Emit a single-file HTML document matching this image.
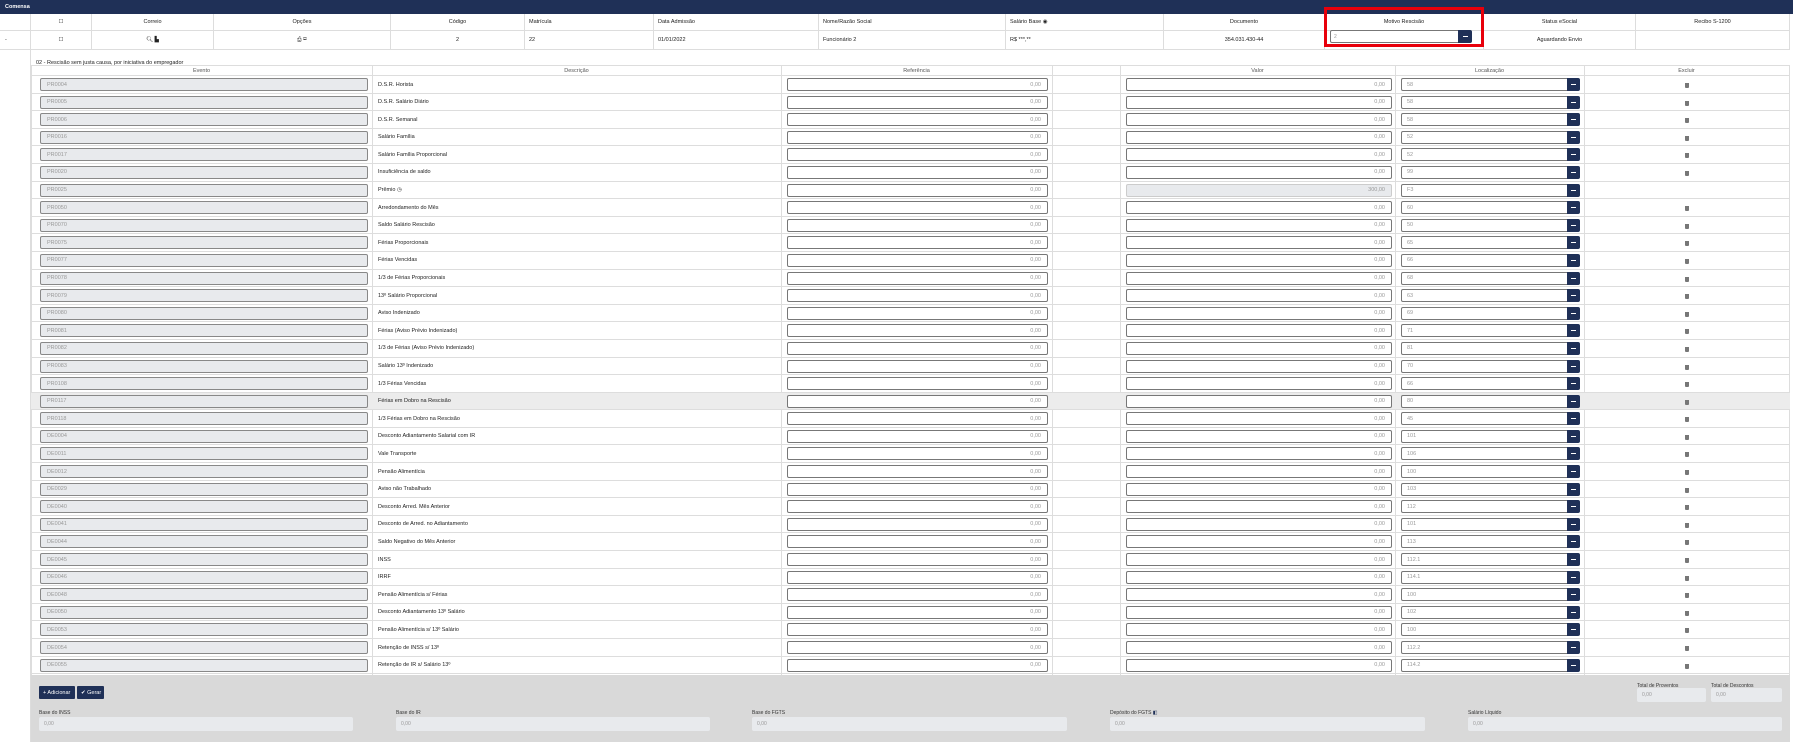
<!DOCTYPE html>
<html><head><meta charset="utf-8"><style>
*{box-sizing:border-box;margin:0;padding:0}
body{width:1793px;height:742px;background:#fff;font-family:"Liberation Sans",sans-serif;font-size:5.5px;color:#222;position:relative;overflow:hidden}
.bar{position:absolute;left:0;top:0;width:1793px;height:14px;background:#1f3057;color:#fff;font-weight:bold;padding:4px 5px;font-size:5.5px}
.th,.td{position:absolute;left:0;width:1790px;border-bottom:1px solid #ddd}
.th{top:14px;height:17px}.td{top:31px;height:19px}
.th span,.td span{position:absolute;top:0;height:100%;border-left:1px solid #ddd;display:flex;align-items:center;justify-content:center}
.gut{position:absolute;left:30px;top:50px;width:1px;height:692px;background:#ddd}
.sub{position:absolute;left:36px;top:60px;font-size:5.5px}
.tbl{position:absolute;left:31px;top:65px;width:1759px}
.hd,.r{position:relative;height:17.6px;border-bottom:1px solid #ddd}
.hd{height:11px}
.hd span{position:absolute;top:0;height:100%;display:flex;align-items:center;justify-content:center;color:#555}
.r>*{position:absolute;top:2px;height:13px;display:flex;align-items:center;font-style:normal;font-weight:normal;text-decoration:none}
.e{left:9px;width:328px;background:#e8eaed;border:1px solid #888;border-radius:2px;padding-left:6px;color:#999}
.d{left:347px;color:#222}
.f{left:756px;width:261px;background:#fff;border:1px solid #777;border-radius:2px;justify-content:flex-end;padding-right:6px;color:#999}
.v{left:1095px;width:266px;background:#fff;border:1px solid #777;border-radius:2px;justify-content:flex-end;padding-right:6px;color:#999}
.v.g{background:#e8eaed;border-color:#ccc}
.l{left:1370px;width:167px;background:#fff;border:1px solid #777;border-radius:2px 0 0 2px;padding-left:5px;color:#999}
.r u{left:1536px;width:13px;background:#1f3057;border-radius:0 2px 2px 0}
.r u:after{content:"";width:5px;height:1px;background:#fff;margin:auto}
.r s{left:1654px;top:7px;width:4px;height:5px;background:#777;border-radius:0 0 1px 1px}
.vl{position:absolute;top:0;width:1px;background:#ddd;height:100%}
.hl{background:#ececec}
.foot{position:absolute;left:31px;top:675px;width:1759px;height:67px;background:#d9d9d9}
.btn{position:absolute;top:11px;height:13px;background:#1f3057;color:#fff;display:flex;align-items:center;padding-left:4px;font-size:5.5px;border-radius:1px}
.lb{position:absolute;font-size:5px;color:#333}
.in{position:absolute;height:14px;background:#e8eaed;border-radius:2px;color:#999;padding:4px 5px;font-size:5px}
</style></head><body>
<div class="bar">Comensa</div>
<div class="th">
<span style="left:30px;width:61px">☐</span><span style="left:91px;width:122px">Correio</span><span style="left:213px;width:177px">Opções</span><span style="left:390px;width:134px">Código</span><span style="left:524px;width:129px;justify-content:flex-start;padding-left:4px">Matrícula</span><span style="left:653px;width:165px;justify-content:flex-start;padding-left:4px">Data Admissão</span><span style="left:818px;width:187px;justify-content:flex-start;padding-left:4px">Nome/Razão Social</span><span style="left:1005px;width:158px;justify-content:flex-start;padding-left:4px">Salário Base ◉</span><span style="left:1163px;width:161px">Documento</span><span style="left:1324px;width:159px">Motivo Rescisão</span><span style="left:1483px;width:152px">Status eSocial</span><span style="left:1635px;width:155px;border-right:1px solid #ddd">Recibo S-1200</span>
</div>
<div class="td">
<span style="left:0;width:30px;border:none;justify-content:flex-start;padding-left:5px">-</span><span style="left:30px;width:61px">☐</span><span style="left:91px;width:122px">🔍︎ ▙</span><span style="left:213px;width:177px">⎙ ✉</span><span style="left:390px;width:134px">2</span><span style="left:524px;width:129px;justify-content:flex-start;padding-left:4px">22</span><span style="left:653px;width:165px;justify-content:flex-start;padding-left:4px">01/01/2022</span><span style="left:818px;width:187px;justify-content:flex-start;padding-left:4px">Funcionário 2</span><span style="left:1005px;width:158px;justify-content:flex-start;padding-left:4px">R$ ***,**</span><span style="left:1163px;width:161px">354.031.430-44</span><span style="left:1324px;width:159px"></span><span style="left:1483px;width:152px">Aguardando Envio</span><span style="left:1635px;width:155px;border-right:1px solid #ddd"></span>
</div>
<div style="position:absolute;left:1330px;top:30px;width:129px;height:13px;border:1px solid #777;border-radius:2px 0 0 2px;color:#999;padding:3px 3px;font-size:5px">2</div>
<div style="position:absolute;left:1458px;top:30px;width:14px;height:13px;background:#1f3057;border-radius:0 2px 2px 0"><div style="width:5px;height:1px;background:#fff;margin:6px auto"></div></div>
<div style="position:absolute;left:1324px;top:7px;width:160px;height:40px;border:3px solid #e8000b"></div>
<div class="gut"></div>
<div class="sub">02 - Rescisão sem justa causa, por iniciativa do empregador</div>
<div class="tbl">
<div class="vl" style="left:0;height:610px"></div><div class="vl" style="left:341px;height:610px"></div><div class="vl" style="left:750px;height:610px"></div><div class="vl" style="left:1021px;height:610px"></div><div class="vl" style="left:1089px;height:610px"></div><div class="vl" style="left:1364px;height:610px"></div><div class="vl" style="left:1553px;height:610px"></div><div class="vl" style="left:1758px;height:610px"></div>
<div class="hd" style="border-top:1px solid #ddd"><span style="left:0;width:341px">Evento</span><span style="left:341px;width:409px">Descrição</span><span style="left:750px;width:271px">Referência</span><span style="left:1089px;width:275px">Valor</span><span style="left:1364px;width:189px">Localização</span><span style="left:1553px;width:205px">Excluir</span></div>
<div class="r"><i class="e">PR0004</i><b class="d">D.S.R. Horista</b><i class="f">0,00</i><i class="v">0,00</i><i class="l">58</i><u></u><s></s></div>
<div class="r"><i class="e">PR0005</i><b class="d">D.S.R. Salário Diário</b><i class="f">0,00</i><i class="v">0,00</i><i class="l">58</i><u></u><s></s></div>
<div class="r"><i class="e">PR0006</i><b class="d">D.S.R. Semanal</b><i class="f">0,00</i><i class="v">0,00</i><i class="l">58</i><u></u><s></s></div>
<div class="r"><i class="e">PR0016</i><b class="d">Salário Família</b><i class="f">0,00</i><i class="v">0,00</i><i class="l">52</i><u></u><s></s></div>
<div class="r"><i class="e">PR0017</i><b class="d">Salário Família Proporcional</b><i class="f">0,00</i><i class="v">0,00</i><i class="l">52</i><u></u><s></s></div>
<div class="r"><i class="e">PR0020</i><b class="d">Insuficiência de saldo</b><i class="f">0,00</i><i class="v">0,00</i><i class="l">99</i><u></u><s></s></div>
<div class="r"><i class="e">PR0025</i><b class="d">Prêmio ◷</b><i class="f">0,00</i><i class="v g">300,00</i><i class="l">F3</i><u></u></div>
<div class="r"><i class="e">PR0050</i><b class="d">Arredondamento do Mês</b><i class="f">0,00</i><i class="v">0,00</i><i class="l">60</i><u></u><s></s></div>
<div class="r"><i class="e">PR0070</i><b class="d">Saldo Salário Rescisão</b><i class="f">0,00</i><i class="v">0,00</i><i class="l">50</i><u></u><s></s></div>
<div class="r"><i class="e">PR0075</i><b class="d">Férias Proporcionais</b><i class="f">0,00</i><i class="v">0,00</i><i class="l">65</i><u></u><s></s></div>
<div class="r"><i class="e">PR0077</i><b class="d">Férias Vencidas</b><i class="f">0,00</i><i class="v">0,00</i><i class="l">66</i><u></u><s></s></div>
<div class="r"><i class="e">PR0078</i><b class="d">1/3 de Férias Proporcionais</b><i class="f">0,00</i><i class="v">0,00</i><i class="l">68</i><u></u><s></s></div>
<div class="r"><i class="e">PR0079</i><b class="d">13º Salário Proporcional</b><i class="f">0,00</i><i class="v">0,00</i><i class="l">63</i><u></u><s></s></div>
<div class="r"><i class="e">PR0080</i><b class="d">Aviso Indenizado</b><i class="f">0,00</i><i class="v">0,00</i><i class="l">69</i><u></u><s></s></div>
<div class="r"><i class="e">PR0081</i><b class="d">Férias (Aviso Prévio Indenizado)</b><i class="f">0,00</i><i class="v">0,00</i><i class="l">71</i><u></u><s></s></div>
<div class="r"><i class="e">PR0082</i><b class="d">1/3 de Férias (Aviso Prévio Indenizado)</b><i class="f">0,00</i><i class="v">0,00</i><i class="l">81</i><u></u><s></s></div>
<div class="r"><i class="e">PR0083</i><b class="d">Salário 13º Indenizado</b><i class="f">0,00</i><i class="v">0,00</i><i class="l">70</i><u></u><s></s></div>
<div class="r"><i class="e">PR0108</i><b class="d">1/3 Férias Vencidas</b><i class="f">0,00</i><i class="v">0,00</i><i class="l">66</i><u></u><s></s></div>
<div class="r hl"><i class="e">PR0117</i><b class="d">Férias em Dobro na Rescisão</b><i class="f">0,00</i><i class="v">0,00</i><i class="l">80</i><u></u><s></s></div>
<div class="r"><i class="e">PR0118</i><b class="d">1/3 Férias em Dobro na Rescisão</b><i class="f">0,00</i><i class="v">0,00</i><i class="l">45</i><u></u><s></s></div>
<div class="r"><i class="e">DE0004</i><b class="d">Desconto Adiantamento Salarial com IR</b><i class="f">0,00</i><i class="v">0,00</i><i class="l">101</i><u></u><s></s></div>
<div class="r"><i class="e">DE0011</i><b class="d">Vale Transporte</b><i class="f">0,00</i><i class="v">0,00</i><i class="l">106</i><u></u><s></s></div>
<div class="r"><i class="e">DE0012</i><b class="d">Pensão Alimentícia</b><i class="f">0,00</i><i class="v">0,00</i><i class="l">100</i><u></u><s></s></div>
<div class="r"><i class="e">DE0029</i><b class="d">Aviso não Trabalhado</b><i class="f">0,00</i><i class="v">0,00</i><i class="l">103</i><u></u><s></s></div>
<div class="r"><i class="e">DE0040</i><b class="d">Desconto Arred. Mês Anterior</b><i class="f">0,00</i><i class="v">0,00</i><i class="l">112</i><u></u><s></s></div>
<div class="r"><i class="e">DE0041</i><b class="d">Desconto de Arred. no Adiantamento</b><i class="f">0,00</i><i class="v">0,00</i><i class="l">101</i><u></u><s></s></div>
<div class="r"><i class="e">DE0044</i><b class="d">Saldo Negativo do Mês Anterior</b><i class="f">0,00</i><i class="v">0,00</i><i class="l">113</i><u></u><s></s></div>
<div class="r"><i class="e">DE0045</i><b class="d">INSS</b><i class="f">0,00</i><i class="v">0,00</i><i class="l">112.1</i><u></u><s></s></div>
<div class="r"><i class="e">DE0046</i><b class="d">IRRF</b><i class="f">0,00</i><i class="v">0,00</i><i class="l">114.1</i><u></u><s></s></div>
<div class="r"><i class="e">DE0048</i><b class="d">Pensão Alimentícia s/ Férias</b><i class="f">0,00</i><i class="v">0,00</i><i class="l">100</i><u></u><s></s></div>
<div class="r"><i class="e">DE0050</i><b class="d">Desconto Adiantamento 13º Salário</b><i class="f">0,00</i><i class="v">0,00</i><i class="l">102</i><u></u><s></s></div>
<div class="r"><i class="e">DE0053</i><b class="d">Pensão Alimentícia s/ 13º Salário</b><i class="f">0,00</i><i class="v">0,00</i><i class="l">100</i><u></u><s></s></div>
<div class="r"><i class="e">DE0054</i><b class="d">Retenção de INSS s/ 13º</b><i class="f">0,00</i><i class="v">0,00</i><i class="l">112.2</i><u></u><s></s></div>
<div class="r"><i class="e">DE0055</i><b class="d">Retenção de IR s/ Salário 13º</b><i class="f">0,00</i><i class="v">0,00</i><i class="l">114.2</i><u></u><s></s></div>
</div>
<div class="foot">
<div class="btn" style="left:8px;width:36px">+ Adicionar</div>
<div class="btn" style="left:46px;width:27px">✔ Gerar</div>
<div class="lb" style="left:1606px;top:8px">Total de Proventos</div><div class="in" style="left:1606px;top:13px;width:69px">0,00</div>
<div class="lb" style="left:1680px;top:8px">Total de Descontos</div><div class="in" style="left:1680px;top:13px;width:71px">0,00</div>
<div class="lb" style="left:8px;top:35px">Base do INSS</div><div class="in" style="left:8px;top:42px;width:314px">0,00</div>
<div class="lb" style="left:365px;top:35px">Base do IR</div><div class="in" style="left:365px;top:42px;width:314px">0,00</div>
<div class="lb" style="left:721px;top:35px">Base do FGTS</div><div class="in" style="left:721px;top:42px;width:315px">0,00</div>
<div class="lb" style="left:1079px;top:35px">Depósito do FGTS <span style="color:#1f3057">◧</span></div><div class="in" style="left:1079px;top:42px;width:315px">0,00</div>
<div class="lb" style="left:1437px;top:35px">Salário Líquido</div><div class="in" style="left:1437px;top:42px;width:314px">0,00</div>
</div>
</body></html>
